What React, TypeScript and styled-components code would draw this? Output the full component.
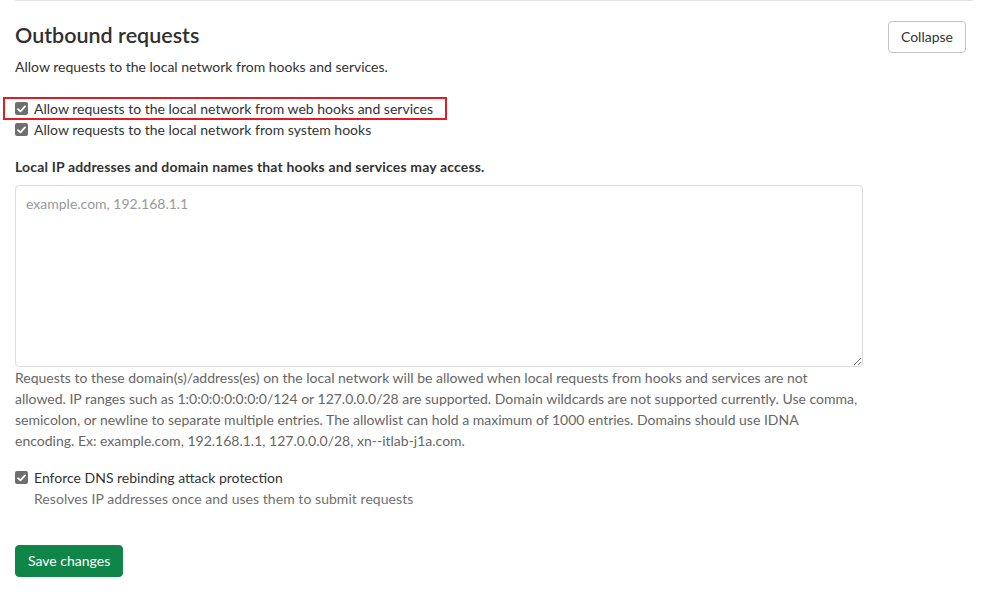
import React from "react";
import styled, { createGlobalStyle } from "styled-components";

const GlobalStyle = createGlobalStyle`
  html, body { margin: 0; padding: 0; background: #fff; }
  body {
    font-family: Lato, "Noto Sans", "Liberation Sans", sans-serif;
    font-size: 14px;
    line-height: 21px;
    color: #333;
  }
  * { box-sizing: border-box; }
`;

const Section = styled.section`
  margin: 0 32px 0 15px;
  border-top: 1px solid #e5e5e5;
  padding-bottom: 16px;
`;

const Header = styled.div`
  display: flex;
  justify-content: space-between;
  align-items: flex-start;
  padding: 20px 7px 0 0;
`;

const Title = styled.h4`
  margin: 0;
  font-size: 21.5px;
  line-height: 28px;
  font-weight: 600;
  color: #303030;
`;

const Button = styled.button<{ $variant?: "default" | "confirm" }>`
  font-family: inherit;
  font-size: 14px;
  line-height: 20px;
  height: 32px;
  padding: 5px 12px;
  border-radius: 4px;
  cursor: pointer;
  border: 1px solid ${(p) => (p.$variant === "confirm" ? "#108548" : "#c4c4c4")};
  background: ${(p) => (p.$variant === "confirm" ? "#108548" : "#fff")};
  color: ${(p) => (p.$variant === "confirm" ? "#fff" : "#333")};
`;

const Description = styled.p`
  margin: 3px 0 0;
`;

const Form = styled.form`
  display: flex;
  flex-direction: column;
  width: 848px;
`;

const CheckGroup = styled.div<{ $mt: number }>`
  display: flex;
  flex-direction: column;
  margin-top: ${(p) => p.$mt}px;
`;

const CheckRow = styled.label`
  position: relative;
  display: flex;
  align-items: center;
  gap: 6px;
  height: 21px;
  cursor: pointer;
`;

const Highlight = styled.span`
  position: absolute;
  left: -12px;
  top: -1px;
  width: 444px;
  height: 23px;
  border: 2px solid #e31b23;
  pointer-events: none;
`;

const Box = styled.span`
  width: 13px;
  height: 13px;
  flex: none;
  border-radius: 2px;
  background: #6f6f6f;
  display: flex;
  align-items: center;
  justify-content: center;
`;

const SubText = styled.div`
  padding-left: 19px;
  color: #707070;
  letter-spacing: 0.05px;
`;

const FieldLabel = styled.label`
  margin-top: 16px;
  font-weight: 700;
  color: #333;
  letter-spacing: 0.16px;
`;

const TextArea = styled.textarea`
  margin-top: 8px;
  display: block;
  width: 100%;
  height: 182px;
  resize: vertical;
  border: 1px solid #dcdcdc;
  border-radius: 4px;
  padding: 7px 10px;
  font-family: inherit;
  font-size: 14px;
  line-height: 21px;
  color: #333;
  &::placeholder { color: #999; }
  outline: none;
`;

const Help = styled.p`
  margin: 0;
  max-width: 843px;
  color: #666;
`;

const Actions = styled.div`
  margin-top: 36px;
`;

const Check = () => (
  <Box>
    <svg width="9" height="8" viewBox="0 0 9 8">
      <path d="M1 4.2 L3.4 6.4 L8 1.4" fill="none" stroke="#fff" strokeWidth="1.8" strokeLinecap="round" strokeLinejoin="round" />
    </svg>
  </Box>
);

export default function App() {
  return (
    <>
      <GlobalStyle />
      <Section>
        <Header>
          <Title>Outbound requests</Title>
          <Button type="button">Collapse</Button>
        </Header>
        <Description>Allow requests to the local network from hooks and services.</Description>
        <Form onSubmit={(e) => e.preventDefault()}>
          <CheckGroup $mt={21}>
            <CheckRow>
              <Check />
              Allow requests to the local network from web hooks and services
              <Highlight />
            </CheckRow>
            <CheckRow>
              <Check />
              Allow requests to the local network from system hooks
            </CheckRow>
          </CheckGroup>
          <FieldLabel>Local IP addresses and domain names that hooks and services may access.</FieldLabel>
          <TextArea placeholder="example.com, 192.168.1.1" />
          <Help>
            Requests to these domain(s)/address(es) on the local network will be allowed when local requests from hooks and services are not allowed. IP ranges such as 1:0:0:0:0:0:0:0/124 or 127.0.0.0/28 are supported. Domain wildcards are not supported currently. Use comma, semicolon, or newline to separate multiple entries. The allowlist can hold a maximum of 1000 entries. Domains should use IDNA encoding. Ex: example.com, 192.168.1.1, 127.0.0.0/28, xn--itlab-j1a.com.
          </Help>
          <CheckGroup $mt={16}>
            <CheckRow>
              <Check />
              Enforce DNS rebinding attack protection
            </CheckRow>
            <SubText>Resolves IP addresses once and uses them to submit requests</SubText>
          </CheckGroup>
          <Actions>
            <Button type="submit" $variant="confirm">Save changes</Button>
          </Actions>
        </Form>
      </Section>
    </>
  );
}
